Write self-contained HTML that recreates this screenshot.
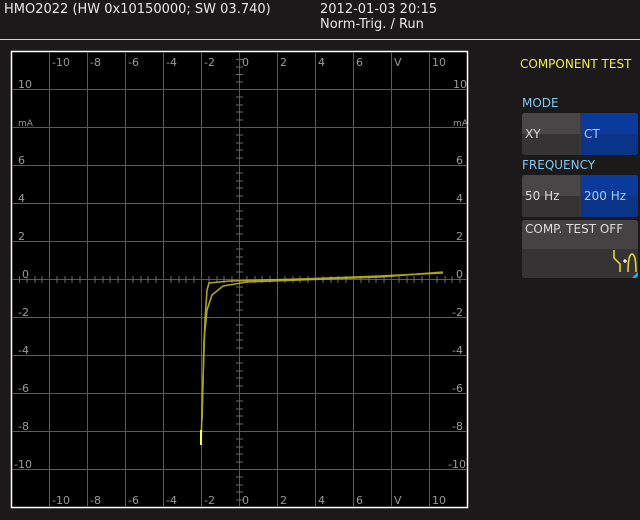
<!DOCTYPE html>
<html><head><style>
body{margin:0;width:640px;height:520px;background:#1b191a;overflow:hidden;font-family:"DejaVu Sans","Liberation Sans",sans-serif;position:relative}
.t{position:absolute;color:#e8e8e8;font-size:13px;white-space:nowrap}
.lb{position:absolute;color:#7fc8ee;font-size:12px}
.btn{position:absolute;left:522px;width:116px;height:42px;border-radius:3px;overflow:hidden;font-size:12px}
.btn div{position:absolute;top:0;height:42px;line-height:42px;padding-left:3px}
</style></head><body>
<div class="t" style="left:4px;top:2px">HMO2022 (HW 0x10150000; SW 03.740)</div>
<div class="t" style="left:320px;top:2px">2012-01-03 20:15</div>
<div class="t" style="left:320px;top:17px">Norm-Trig. / Run</div>
<div style="position:absolute;left:0;top:39px;width:640px;height:1px;background:#d0d0d0"></div>
<svg style="position:absolute;left:0;top:0" width="640" height="520">
<rect x="11.5" y="51.5" width="456" height="456" fill="#000" stroke="#fff" stroke-width="1.5"/>
<g stroke="#5a5a5a" stroke-width="1">
<path d="M49.5 52V507M87.5 52V507M125.5 52V507M163.5 52V507M201.5 52V507M239.5 52V507M277.5 52V507M315.5 52V507M353.5 52V507M391.5 52V507M429.5 52V507"/>
<path d="M12 89.5H467M12 127.5H467M12 165.5H467M12 203.5H467M12 241.5H467M12 279.5H467M12 317.5H467M12 355.5H467M12 393.5H467M12 431.5H467M12 469.5H467"/>
</g>
<g fill="#9a9a9a" font-size="11" font-family="DejaVu Sans,sans-serif">
<text x="52" y="66">-10</text><text x="90" y="66">-8</text><text x="128" y="66">-6</text><text x="166" y="66">-4</text><text x="204" y="66">-2</text><text x="242" y="66">0</text><text x="280" y="66">2</text><text x="318" y="66">4</text><text x="356" y="66">6</text><text x="394" y="66">V</text><text x="432" y="66">10</text>
<text x="52" y="504">-10</text><text x="90" y="504">-8</text><text x="128" y="504">-6</text><text x="166" y="504">-4</text><text x="204" y="504">-2</text><text x="242" y="504">0</text><text x="280" y="504">2</text><text x="318" y="504">4</text><text x="356" y="504">6</text><text x="394" y="504">V</text><text x="432" y="504">10</text>
<text x="18" y="88">10</text><text x="453" y="88">10</text>
<text x="18" y="126" font-size="9">mA</text><text x="453" y="126" font-size="9">mA</text>
<text x="18" y="164">6</text><text x="456" y="164">6</text>
<text x="18" y="202">4</text><text x="456" y="202">4</text>
<text x="18" y="240">2</text><text x="456" y="240">2</text>
<text x="22" y="278">0</text><text x="456" y="278">0</text>
<text x="18" y="316">-2</text><text x="452" y="316">-2</text>
<text x="18" y="354">-4</text><text x="452" y="354">-4</text>
<text x="18" y="392">-6</text><text x="452" y="392">-6</text>
<text x="18" y="430">-8</text><text x="452" y="430">-8</text>
<text x="14" y="468">-10</text><text x="448" y="468">-10</text>
</g>
<g stroke="#6a6a6a">
<path d="M236 59.5H243M236 67H243M236 74.5H243M236 82H243M236 97H243M236 105H243M236 112H243M236 120H243M236 135H243M236 143H243M236 150H243M236 158H243M236 173H243M236 181H243M236 188H243M236 196H243M236 211H243M236 219H243M236 226H243M236 234H243M236 249H243M236 257H243M236 264H243M236 272H243M236 287H243M236 295H243M236 302H243M236 310H243M236 325H243M236 333H243M236 340H243M236 348H243M236 363H243M236 371H243M236 378H243M236 386H243M236 401H243M236 409H243M236 416H243M236 424H243M236 439H243M236 447H243M236 454H243M236 462H243M236 477H243M236 485H243M236 492H243M236 500H243"/>
<path d="M19.5 276V283M27 276V283M35 276V283M42 276V283M57 276V283M65 276V283M72 276V283M80 276V283M95 276V283M103 276V283M110 276V283M118 276V283M133 276V283M141 276V283M148 276V283M156 276V283M171 276V283M179 276V283M186 276V283M194 276V283M209 276V283M217 276V283M224 276V283M232 276V283M247 276V283M255 276V283M262 276V283M270 276V283M285 276V283M293 276V283M300 276V283M308 276V283M323 276V283M331 276V283M338 276V283M346 276V283M361 276V283M369 276V283M376 276V283M384 276V283M399 276V283M407 276V283M414 276V283M422 276V283M437 276V283M445 276V283M452 276V283M460 276V283"/>
</g>
<g fill="none" stroke="#c8c020" stroke-width="1.6" opacity="0.85">
<path d="M201 445 L203 380 L205 320 L207 290 L209 283 L230 281 L300 279 L380 276 L443 273"/>
<path d="M202 420 L204 340 L207 310 L212 295 L223 286 L247 282 L300 280 L380 277 L443 272"/>
</g>
<path d="M201 445V430" stroke="#ffff40" stroke-width="2"/>
</svg>
<div class="t" style="left:520px;top:57px;color:#f0f040;font-size:12px">COMPONENT TEST</div>
<div class="lb" style="left:522px;top:96px">MODE</div>
<div class="btn" style="top:113px;background:#3a3839"><div style="left:0;width:55px;background:linear-gradient(#484647 50%,#353334 50%);color:#ddd">XY</div><div style="left:59px;width:54px;background:linear-gradient(#0a3a9c 50%,#0a3488 50%);color:#9cd0ff">CT</div></div>
<div class="lb" style="left:522px;top:158px">FREQUENCY</div>
<div class="btn" style="top:175px;background:#3a3839"><div style="left:0;width:55px;background:linear-gradient(#484647 50%,#353334 50%);color:#ddd">50 Hz</div><div style="left:59px;width:54px;background:linear-gradient(#0a3a9c 50%,#0a3488 50%);color:#9cd0ff">200 Hz</div></div>
<div class="btn" style="top:220px;height:58px;background:linear-gradient(#444243 50%,#353334 50%)"><div style="left:0;height:18px;line-height:18px;color:#ddd">COMP. TEST OFF</div>
<svg style="position:absolute;left:90px;top:28px" width="26" height="30"><path d="M2 2V10L8 16V24" stroke="#f0e020" fill="none" stroke-width="1.5"/><path d="M16 24C16 10 18 6 20 6S24 10 24 24" stroke="#f0e020" fill="none" stroke-width="1.5"/><path d="M11 13h4M13 11v4" stroke="#fff" stroke-width="1.2"/><path d="M26 24V30H20Z" fill="#20b0f0"/></svg></div>
</body></html>
